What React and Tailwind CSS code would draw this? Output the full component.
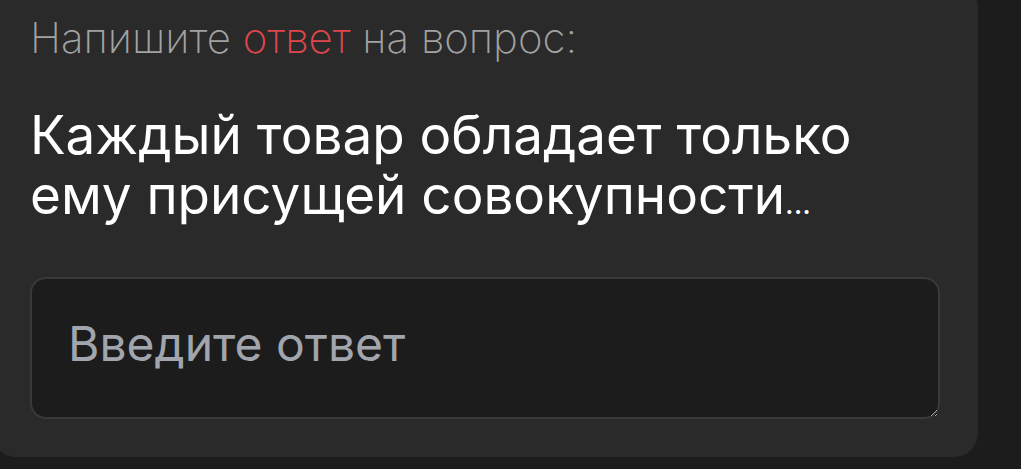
import { useState } from "react";

export default function App() {
  const [answer, setAnswer] = useState("");

  return (
    <div className="min-h-screen bg-[#1c1c1c] overflow-hidden">
      <div className="-mt-4 -ml-2 w-[986px] rounded-3xl bg-[#2a2a2a] pl-[38px] pr-[38px] pt-[30px] pb-[38px] font-['Inter',sans-serif]">
        <p className="text-[42px] leading-[48px] font-extralight text-[#a2a2a2]">
          Напишите <span className="text-[#e0474c]">ответ</span> на вопрос:
        </p>

        <h2 className="mt-[43px] text-[53px] leading-[60px] text-white">
          Каждый товар обладает только
          <br />
          ему присущей совокупности<span className="text-[30px]">...</span>
        </h2>

        <textarea
          value={answer}
          onChange={(e) => setAnswer(e.target.value)}
          placeholder="Введите ответ"
          className="mt-[44px] block w-full h-[142px] rounded-2xl border-2 border-[#393939] bg-[#1c1c1c] px-[36px] pt-[37px] pb-0 text-[48px] leading-[56px] text-white placeholder:text-[#a1a5ad] outline-none"
        />
      </div>
    </div>
  );
}
